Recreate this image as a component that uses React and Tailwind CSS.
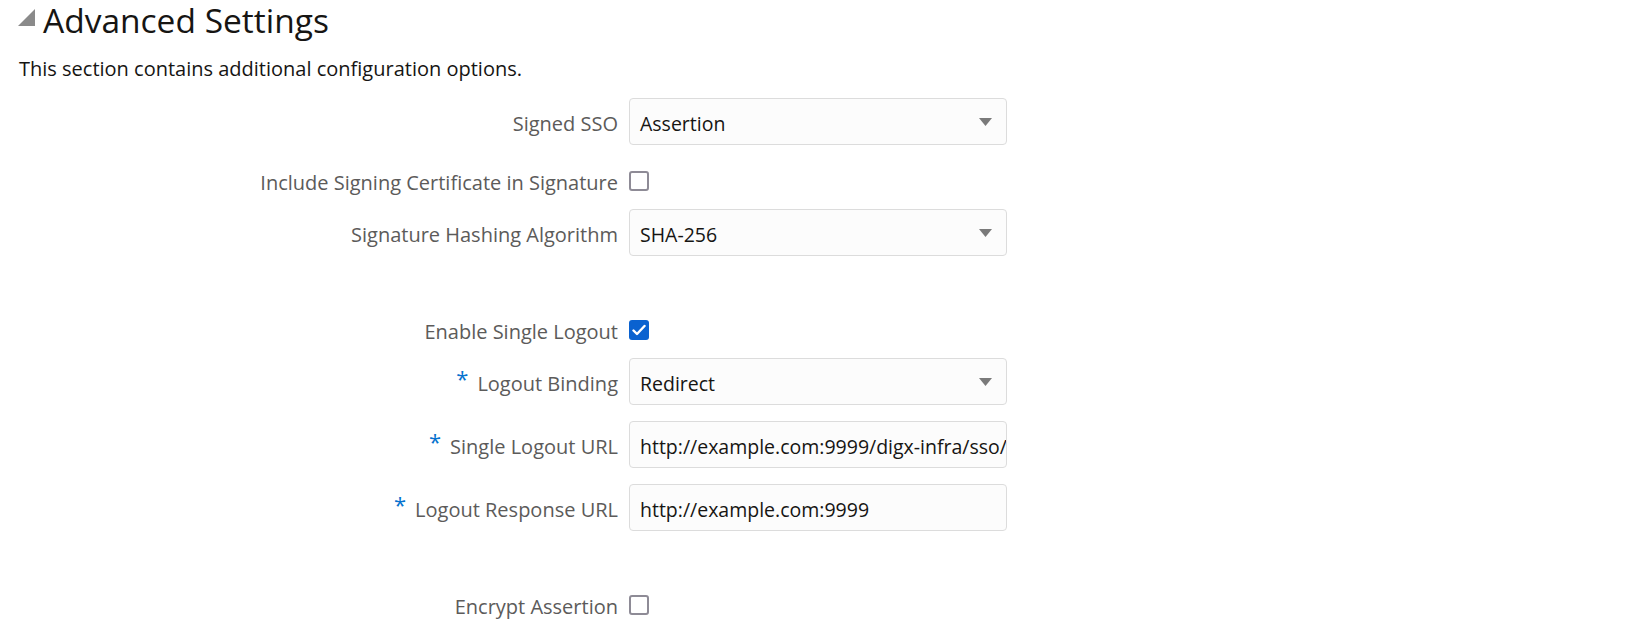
import React from "react";

const font = { fontFamily: '"Open Sans", "Noto Sans", Arial, sans-serif' };

const Label = ({ text, required }) => (
  <div className="w-[629px] shrink-0 pr-[11px] pt-[5px] flex items-center justify-end text-[20px] text-[#5c5b5a] whitespace-nowrap">
    {required && <span className="text-[#0572ce] text-[22px] mr-[9px] -mt-[12px]">*</span>}
    <span>{text}</span>
  </div>
);

const Caret = () => (
  <svg width="13" height="8" viewBox="0 0 13 8" className="shrink-0">
    <path d="M0 0 H13 L6.5 8 Z" fill="#7a7a7a" />
  </svg>
);

const SelectRow = ({ label, value, required, className }) => (
  <div className={"flex " + className}>
    <Label text={label} required={required} />
    <div className="w-[378px] h-[47px] flex items-center justify-between pl-[10px] pr-[14px] bg-[#fcfcfc] border border-[#dcdcdc] rounded-[4px] text-[19.5px] text-[#161513]">
      <span className="pt-[4px]">{value}</span>
      <Caret />
    </div>
  </div>
);

const InputRow = ({ label, value, required, className }) => (
  <div className={"flex " + className}>
    <Label text={label} required={required} />
    <div className="w-[378px] h-[47px] flex items-center pl-[10px] bg-[#fcfcfc] border border-[#dcdcdc] rounded-[4px] text-[19.5px] text-[#161513] overflow-hidden whitespace-nowrap">
      <span className="pt-[4px]">{value}</span>
    </div>
  </div>
);

const CheckRow = ({ label, checked, className }) => (
  <div className={"flex h-[20px] " + className}>
    <Label text={label} />
    {checked ? (
      <div className="w-[20px] h-[20px] mt-[1px] rounded-[3px] bg-[#0a62d0] flex items-center justify-center">
        <svg width="14" height="12" viewBox="0 0 14 12">
          <path d="M1.5 6.5 L5 10 L12.5 2" stroke="#fff" strokeWidth="2.4" fill="none" strokeLinecap="round" strokeLinejoin="round" />
        </svg>
      </div>
    ) : (
      <div className="w-[20px] h-[20px] mt-[1px] rounded-[3px] border-2 border-[#8e8b96] bg-white" />
    )}
  </div>
);

export default function App() {
  return (
    <div className="w-[1635px] h-[637px] bg-white overflow-hidden" style={font}>
      <div className="flex items-center h-[40px]">
        <svg width="17" height="17" viewBox="0 0 17 17" className="ml-[18px] mr-[8px] mt-[-6px]">
          <path d="M17 0 V17 H0 Z" fill="#8a8a8a" />
        </svg>
        <h1 className="text-[33.5px] text-[#161513] leading-[40px]">Advanced Settings</h1>
      </div>
      <p className="ml-[19px] mt-[19px] text-[20px] text-[#161513] leading-[20px] whitespace-nowrap">
        This section contains additional configuration options.
      </p>
      <div className="flex flex-col mt-[19px]">
        <SelectRow label="Signed SSO" value="Assertion" className="" />
        <CheckRow label="Include Signing Certificate in Signature" className="mt-[25px]" />
        <SelectRow label="Signature Hashing Algorithm" value="SHA-256" className="mt-[19px]" />
        <CheckRow label="Enable Single Logout" checked className="mt-[63px]" />
        <SelectRow label="Logout Binding" value="Redirect" required className="mt-[19px]" />
        <InputRow label="Single Logout URL" value="http://example.com:9999/digx-infra/sso/logout" required className="mt-[16px]" />
        <InputRow label="Logout Response URL" value="http://example.com:9999" required className="mt-[16px]" />
        <CheckRow label="Encrypt Assertion" className="mt-[63px]" />
      </div>
    </div>
  );
}
